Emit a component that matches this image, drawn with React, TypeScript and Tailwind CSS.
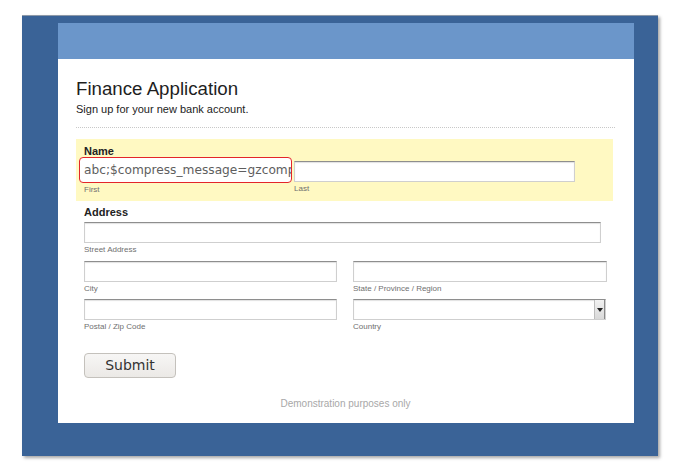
import React from "react";

const inputCls =
  "h-[21px] bg-white border border-[#cfcfcf] border-t-[#8e8e8e] shadow-[inset_0_1px_1px_rgba(0,0,0,0.12)]";
const subLabel = "text-[8px] leading-[10px] text-[#6f6f6f] mt-[2px]";

export default function App() {
  return (
    <div
      className="min-h-screen w-full bg-white"
      style={{ fontFamily: '"Liberation Sans", Arial, sans-serif' }}
    >
      <div className="ml-[22px] pt-[15px]">
        <div className="w-[636px] h-[441px] bg-[#3a6397] border-t border-[#8d99a8] shadow-[2px_2px_3px_rgba(0,0,0,0.35)] pt-[7px] pl-[36px]">
          <div className="w-[576px] h-[400px] bg-white flex flex-col">
            <div className="h-[36px] bg-[#6b96ca]" />
            <div className="pl-[18px] pr-[19px] pt-[20px] flex flex-col">
              <h1 className="text-[18.7px] leading-[20px] text-[#1e1e1e] font-normal">
                Finance Application
              </h1>
              <p className="mt-[4px] text-[11px] leading-[13px] text-[#222]">
                Sign up for your new bank account.
              </p>
              <div className="mt-[11px] border-t border-dotted border-[#c8c8c8]" />

              {/* Name (highlighted) */}
              <div className="mt-[11px] w-[537px] h-[62px] bg-[#fff9c2] pl-[8px] pt-[6px]">
                <div className="text-[11px] leading-[13px] font-bold text-[#222]">Name</div>
                <div className="flex mt-[3px]">
                  <div className="w-[210px] flex flex-col">
                    <div
                      className="ml-[-5px] mt-[-4px] w-[213px] h-[26px] bg-white border border-[#e3262a] rounded-[4px] overflow-hidden whitespace-nowrap pl-[4px] text-[12.2px] leading-[24px] text-[#5e5e5e]"
                      style={{ fontFamily: '"DejaVu Sans", sans-serif' }}
                    >
                      abc;$compress_message=gzcomp
                    </div>
                    <div className={subLabel + " mt-[1px]"}>First</div>
                  </div>
                  <div className="w-[281px] flex flex-col">
                    <div className={inputCls + " w-[281px]"} />
                    <div className={subLabel}>Last</div>
                  </div>
                </div>
              </div>

              {/* Address */}
              <div className="pl-[8px] mt-[5px] flex flex-col">
                <div className="text-[11px] leading-[13px] font-bold text-[#222]">Address</div>
                <div className={inputCls + " w-[517px] mt-[3px]"} />
                <div className={subLabel}>Street Address</div>

                <div className="flex gap-[16px] mt-[6px]">
                  <div className="w-[253px] flex flex-col">
                    <div className={inputCls + " w-full"} />
                    <div className={subLabel}>City</div>
                  </div>
                  <div className="w-[254px] flex flex-col">
                    <div className={inputCls + " w-full"} />
                    <div className={subLabel}>State / Province / Region</div>
                  </div>
                </div>

                <div className="flex gap-[16px] mt-[5px]">
                  <div className="w-[253px] flex flex-col">
                    <div className={inputCls + " w-full"} />
                    <div className={subLabel}>Postal / Zip Code</div>
                  </div>
                  <div className="w-[253px] flex flex-col">
                    <div className={inputCls + " w-full flex justify-end"}>
                      <div className="w-[11px] h-full bg-gradient-to-b from-[#f2f2f2] to-[#d9d9d9] border-l border-[#bdbdbd] border-r border-r-[#8a8a8a] flex items-center justify-center">
                        <svg width="6" height="4" viewBox="0 0 6 4">
                          <path d="M0 0 L6 0 L3 4 Z" fill="#222" />
                        </svg>
                      </div>
                    </div>
                    <div className={subLabel}>Country</div>
                  </div>
                </div>

                <button
                  className="mt-[21px] w-[92px] h-[25px] rounded-[4px] border border-[#c4c1bc] bg-gradient-to-b from-[#f7f6f5] to-[#ebe9e6] text-[14px] leading-[23px] text-[#333]"
                  style={{ fontFamily: '"DejaVu Sans", sans-serif' }}
                >
                  Submit
                </button>
              </div>

              <div className="mt-[20px] text-center text-[10px] leading-[12px] text-[#a8a8a8]">
                Demonstration purposes only
              </div>
            </div>
          </div>
        </div>
      </div>
    </div>
  );
}
